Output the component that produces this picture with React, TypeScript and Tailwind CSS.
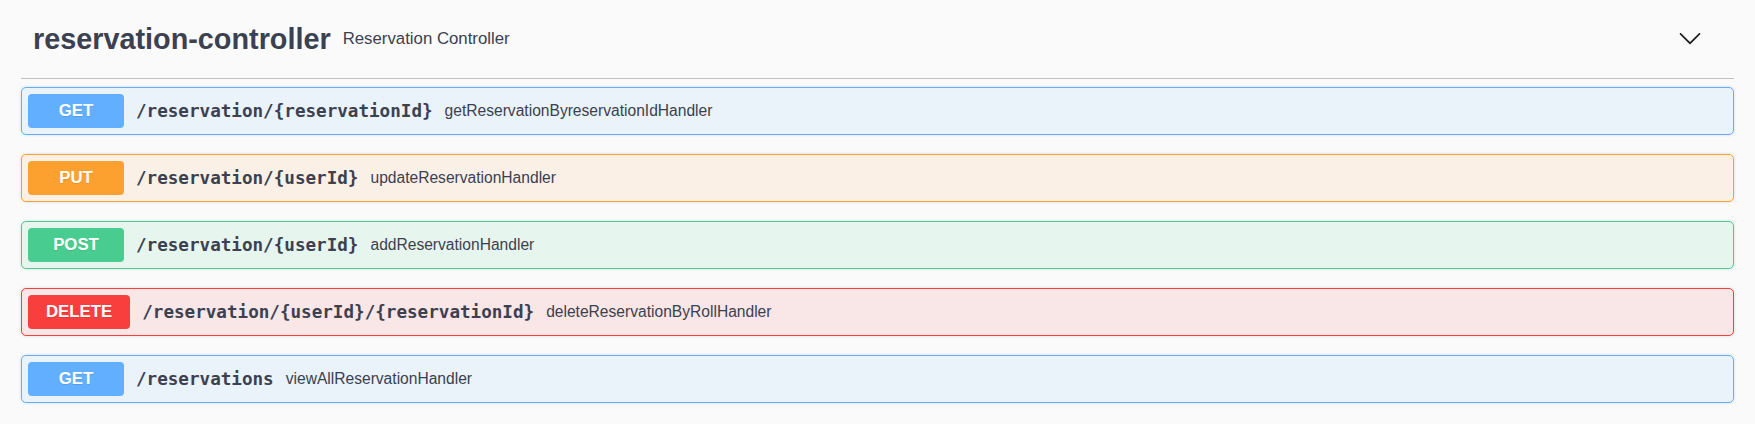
const ops = [
  {
    method: "GET",
    path: "/reservation/{reservationId}",
    summary: "getReservationByreservationIdHandler",
    border: "border-[#61affe]",
    bg: "bg-[#61affe]/10",
    badge: "bg-[#61affe]",
  },
  {
    method: "PUT",
    path: "/reservation/{userId}",
    summary: "updateReservationHandler",
    border: "border-[#fca130]",
    bg: "bg-[#fca130]/10",
    badge: "bg-[#fca130]",
  },
  {
    method: "POST",
    path: "/reservation/{userId}",
    summary: "addReservationHandler",
    border: "border-[#49cc90]",
    bg: "bg-[#49cc90]/10",
    badge: "bg-[#49cc90]",
  },
  {
    method: "DELETE",
    path: "/reservation/{userId}/{reservationId}",
    summary: "deleteReservationByRollHandler",
    border: "border-[#f93e3e]",
    bg: "bg-[#f93e3e]/10",
    badge: "bg-[#f93e3e]",
  },
  {
    method: "GET",
    path: "/reservations",
    summary: "viewAllReservationHandler",
    border: "border-[#61affe]",
    bg: "bg-[#61affe]/10",
    badge: "bg-[#61affe]",
  },
];

function Chevron() {
  return (
    <svg width="24" height="24" viewBox="0 0 20 20" className="fill-[#1f1f1f]">
      <path d="M17.418 6.109c.272-.268.709-.268.979 0s.271.701 0 .969l-7.908 7.83c-.27.268-.707.268-.979 0l-7.908-7.83c-.27-.268-.27-.701 0-.969.271-.268.709-.268.979 0L10 13.25l7.418-7.141z" />
    </svg>
  );
}

export default function App() {
  return (
    <div className="min-h-screen bg-[#fafafa] px-[21px] text-[#3b4151] font-['Liberation_Sans',Arial,sans-serif]">
      <div className="flex h-[79px] items-center border-b border-[#3b4151]/30 pl-[12px]">
        <h3 className="text-[28.8px] font-bold leading-none">
          reservation-controller
        </h3>
        <small className="flex-1 px-[12px] text-[16.8px]">
          Reservation Controller
        </small>
        <div className="mr-[32px] -mt-[3px]">
          <Chevron />
        </div>
      </div>
      <div className="mt-[8px] flex flex-col gap-[19px]">
        {ops.map((op, i) => (
          <div
            key={i}
            className={`flex items-center rounded-[5px] border p-[6px] shadow-[0_0_3px_rgba(0,0,0,0.15)] ${op.border} ${op.bg}`}
          >
            <span
              className={`flex h-[34px] min-w-[96px] items-center justify-center rounded-[4px] px-[18px] text-[16.8px] font-bold text-white [text-shadow:0_1px_0_rgba(0,0,0,0.1)] ${op.badge}`}
            >
              {op.method}
            </span>
            <span className="px-[12px] font-['DejaVu_Sans_Mono',monospace] text-[17.6px] font-bold">
              {op.path}
            </span>
            <span className="text-[15.6px]">{op.summary}</span>
          </div>
        ))}
      </div>
    </div>
  );
}
